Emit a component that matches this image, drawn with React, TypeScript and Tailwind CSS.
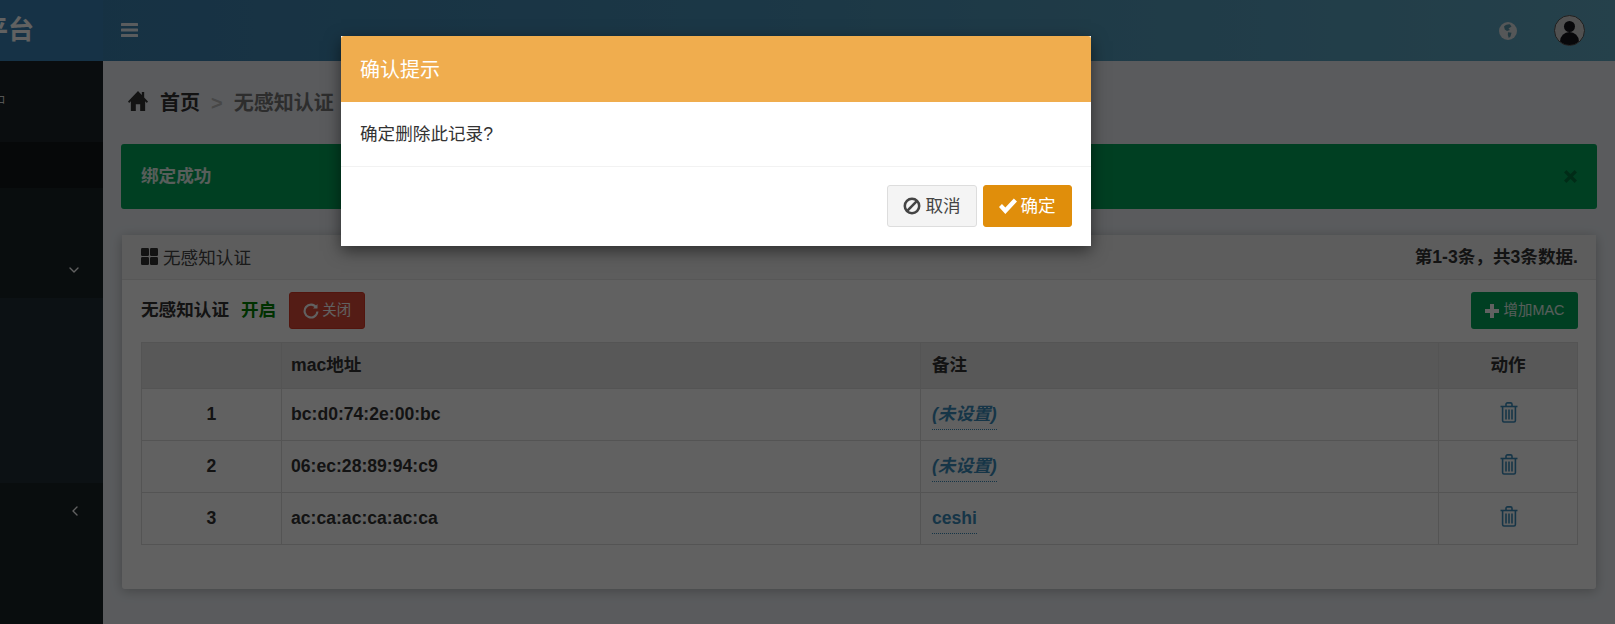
import { ChevronDown, ChevronLeft } from "lucide-react";

const font = "font-['Liberation_Sans','Noto_Sans_CJK_SC',sans-serif]";

function Trash() {
  return (
    <svg width="18" height="21" viewBox="0 0 18 21" fill="none" stroke="#3c8dbc" strokeWidth="1.6" className="inline-block">
      <path d="M0.5 4.5H17.5" />
      <path d="M6 4.5V2.2C6 1.4 6.6 0.9 7.4 0.9H10.6C11.4 0.9 12 1.4 12 2.2V4.5" />
      <path d="M2.6 4.5V18.5C2.6 19.4 3.2 20 4 20H14C14.8 20 15.4 19.4 15.4 18.5V4.5" />
      <path d="M6 7.5V17.5M9 7.5V17.5M12 7.5V17.5" />
    </svg>
  );
}

function Row({ n, mac, note, italic, last }: { n: number; mac: string; note: string; italic?: boolean; last?: boolean }) {
  return (
    <div className={`grid grid-cols-[140px_639px_518px_138px] font-bold text-[17.6px] text-[#333] ${last ? "h-[51px]" : "h-[52px] border-b border-[#ddd]"}`}>
      <div className="flex items-center justify-center border-r border-[#ddd]">{n}</div>
      <div className="flex items-center border-r border-[#ddd] pl-[9px]">{mac}</div>
      <div className="flex items-center border-r border-[#ddd] pl-[11px]">
        <span className={`h-[31px] border-b border-dotted border-[#3c8dbc] leading-[30px] text-[#3c8dbc] ${italic ? "italic" : ""}`}>{note}</span>
      </div>
      <div className="flex items-center justify-center pb-[4px] pl-[2px]"><Trash /></div>
    </div>
  );
}

export default function App() {
  return (
    <div className={`${font} relative flex h-[624px] w-[1615px] flex-col overflow-hidden bg-[#ecf0f5]`}>
      <header className="flex h-[61px] shrink-0 bg-gradient-to-r from-[#3a80b0] via-[#4a93b8] to-[#62aac4]">
        <div className="flex h-full w-[103px] shrink-0 items-center justify-end overflow-hidden bg-[#3a85b8] pr-[69px]">
          <span className="shrink-0 text-[26px] font-bold text-white">平台</span>
        </div>
        <div className="flex flex-1 items-center justify-between pl-[18px] pr-[30px]">
          <svg width="17" height="14" viewBox="0 0 17 14" fill="white" className="mb-[2px] opacity-90">
            <rect y="0" width="17" height="3" rx="0.6" /><rect y="5.5" width="17" height="3" rx="0.6" /><rect y="11" width="17" height="3" rx="0.6" />
          </svg>
          <div className="flex items-center gap-[37px]">
            <svg width="18" height="18" viewBox="0 0 18 18" className="mt-[1px]">
              <circle cx="9" cy="9" r="9" fill="#e0e4e6" />
              <path d="M5 4.5C6.5 3 9.5 2 11 2.5L12.5 4.5L9.5 6.5L11 8L8 9L5.8 7.5ZM9 10.2L12.5 10.8L11.5 14.5L9.8 16L8.8 13Z" fill="#5a97ab" />
            </svg>
            <div className="relative h-[31px] w-[31px] overflow-hidden rounded-full border border-[#555] bg-[#d4d4d4]">
              <div className="absolute left-[9px] top-[5px] h-[11px] w-[11px] rounded-full bg-[#16161c]" />
              <div className="absolute left-[5px] top-[16px] h-[18px] w-[19px] rounded-t-full bg-[#16161c]" />
            </div>
          </div>
        </div>
      </header>
      <div className="flex min-h-0 flex-1">
        <aside className="flex w-[103px] shrink-0 flex-col bg-[#1b2428]">
          <div className="h-[81px] shrink-0 overflow-hidden pt-[35px] text-[9px] leading-none text-white"><span className="-ml-[4px] block">口</span></div>
          <div className="h-[46px] shrink-0 bg-[#11171a]" />
          <div className="flex h-[110px] shrink-0 items-center justify-end bg-[#1a2226] pr-[21px] pt-[54px]">
            <ChevronDown size={16} className="text-white" />
          </div>
          <div className="h-[185px] shrink-0 bg-[#212d36]" />
          <div className="flex flex-1 items-start bg-[#1a2226] pl-[67px] pt-[20px]">
            <ChevronLeft size={16} className="text-white" />
          </div>
        </aside>
        <main className="min-w-0 flex-1 pl-[18px] pr-[18px]">
          <div className="flex h-[83px] items-center gap-[11px] pl-[7px] text-[20px] font-bold">
            <svg width="20" height="20" viewBox="0 0 21 18" preserveAspectRatio="none" fill="#333" className="mb-[3px] mr-[1px]"><path d="M10.5 0L0 9.5L1.2 10.8L3 9.2V18H8.2V12H12.8V18H18V9.2L19.8 10.8L21 9.5L17 5.9V1H14.5V3.6Z" /></svg>
            <span className="text-[#333]">首页</span>
            <span className="text-[#bbb]">&gt;</span>
            <span className="text-[#777]">无感知认证</span>
          </div>
          <div className="flex h-[65px] items-center justify-between rounded-[3px] bg-[#00a65a] px-[20px] text-[17.6px] font-bold text-white/90">
            <span>绑定成功</span>
            <svg width="13" height="13" viewBox="0 0 13 13" stroke="black" strokeOpacity="0.3" strokeWidth="3.4"><path d="M1.2 1.2L11.8 11.8M11.8 1.2L1.2 11.8" /></svg>
          </div>
          <section className="mx-[1px] mt-[26px] h-[354px] rounded-[3px] bg-white shadow-[0_2px_12px_rgba(0,0,0,0.25)]">
            <div className="flex h-[45px] items-center justify-between border-b border-[#e5e5e5] bg-[#f5f5f5] pl-[19px] pr-[18px]">
              <div className="flex items-center gap-[5px] text-[17.6px] text-[#444]">
                <svg width="17" height="17" viewBox="0 0 17 17" fill="#333">
                  <rect width="8" height="8" rx="1.2" /><rect x="9" width="8" height="8" rx="1.2" /><rect y="9" width="8" height="8" rx="1.2" /><rect x="9" y="9" width="8" height="8" rx="1.2" />
                </svg>
                <span className="pt-[2px]">无感知认证</span>
              </div>
              <span className="text-[17.6px] font-bold text-[#333]">第1-3条，共3条数据.</span>
            </div>
            <div className="pl-[19px] pr-[18px] pt-[12px]">
              <div className="flex h-[37px] items-center justify-between">
                <div className="flex items-center text-[17.6px] font-bold text-[#333]">
                  <span>无感知认证</span>
                  <span className="ml-[12px] text-[#008000]">开启</span>
                  <button className="ml-[13px] flex h-[37px] w-[76px] items-center justify-center gap-[3px] rounded-[3px] border border-[#d73925] bg-[#dd4b39] text-[14.4px] font-normal text-white">
                    <svg width="16" height="16" viewBox="0 0 15 15" fill="none" stroke="white" strokeWidth="2">
                      <path d="M12.5 4.2A6 6 0 1 0 13.5 8" /><path d="M13.6 1V5.2H9.4" fill="white" stroke="none" />
                    </svg>
                    关闭
                  </button>
                </div>
                <button className="flex h-[37px] w-[107px] items-center justify-center gap-[5px] rounded-[3px] bg-[#00a65a] text-[14.4px] text-white/90">
                  <svg width="14" height="14" viewBox="0 0 14 14" fill="white"><path d="M5 0H9V5H14V9H9V14H5V9H0V5H5Z" /></svg>
                  增加MAC
                </button>
              </div>
              <div className="mt-[13px] w-[1437px] border border-[#ddd]">
                <div className="grid h-[46px] grid-cols-[140px_639px_518px_138px] border-b border-[#ddd] bg-[#e6e6e6] text-[17.6px] font-bold text-[#333]">
                  <div className="border-r border-[#ddd]" />
                  <div className="flex items-center border-r border-[#ddd] pl-[9px]">mac地址</div>
                  <div className="flex items-center border-r border-[#ddd] pl-[11px]">备注</div>
                  <div className="flex items-center justify-center">动作</div>
                </div>
                <Row n={1} mac="bc:d0:74:2e:00:bc" note="(未设置)" italic />
                <Row n={2} mac="06:ec:28:89:94:c9" note="(未设置)" italic />
                <Row n={3} mac="ac:ca:ac:ca:ac:ca" note="ceshi" last />
              </div>
            </div>
          </section>
        </main>
      </div>
      <div className="absolute inset-0 bg-black/[0.62]" />
      <div className="absolute left-[341px] top-[36px] w-[750px] bg-white shadow-[0_5px_15px_rgba(0,0,0,0.5)]">
        <div className="flex h-[66px] items-center rounded-t-[3px] bg-[#f0ad4e] px-[19px] pt-[2px] text-[20px] text-white">确认提示</div>
        <div className="flex h-[65px] items-center border-b border-[#f2f2f2] px-[19px] text-[17.6px] text-[#333]">确定删除此记录?</div>
        <div className="flex h-[79px] items-start justify-end gap-[6px] pr-[19px] pt-[18px]">
          <button className="flex h-[42px] w-[90px] items-center justify-center gap-[4px] rounded-[3px] border border-[#ddd] bg-[#f4f4f4] text-[17.6px] text-[#444]">
            <svg width="18" height="18" viewBox="0 0 17 17" fill="none" stroke="#444" strokeWidth="2.4"><circle cx="8.5" cy="8.5" r="6.8" /><path d="M12.8 4.2L4.2 12.8" /></svg>
            取消
          </button>
          <button className="flex h-[42px] w-[89px] items-center justify-center gap-[3px] rounded-[3px] border border-[#e08e0b] bg-[#e08e0b] text-[17.6px] text-white">
            <svg width="18" height="16" viewBox="0 0 17 15" fill="white"><path d="M0 8.5L2.8 5.7L6 8.9L14 0.5L17 3.3L6 15Z" /></svg>
            确定
          </button>
        </div>
      </div>
    </div>
  );
}
